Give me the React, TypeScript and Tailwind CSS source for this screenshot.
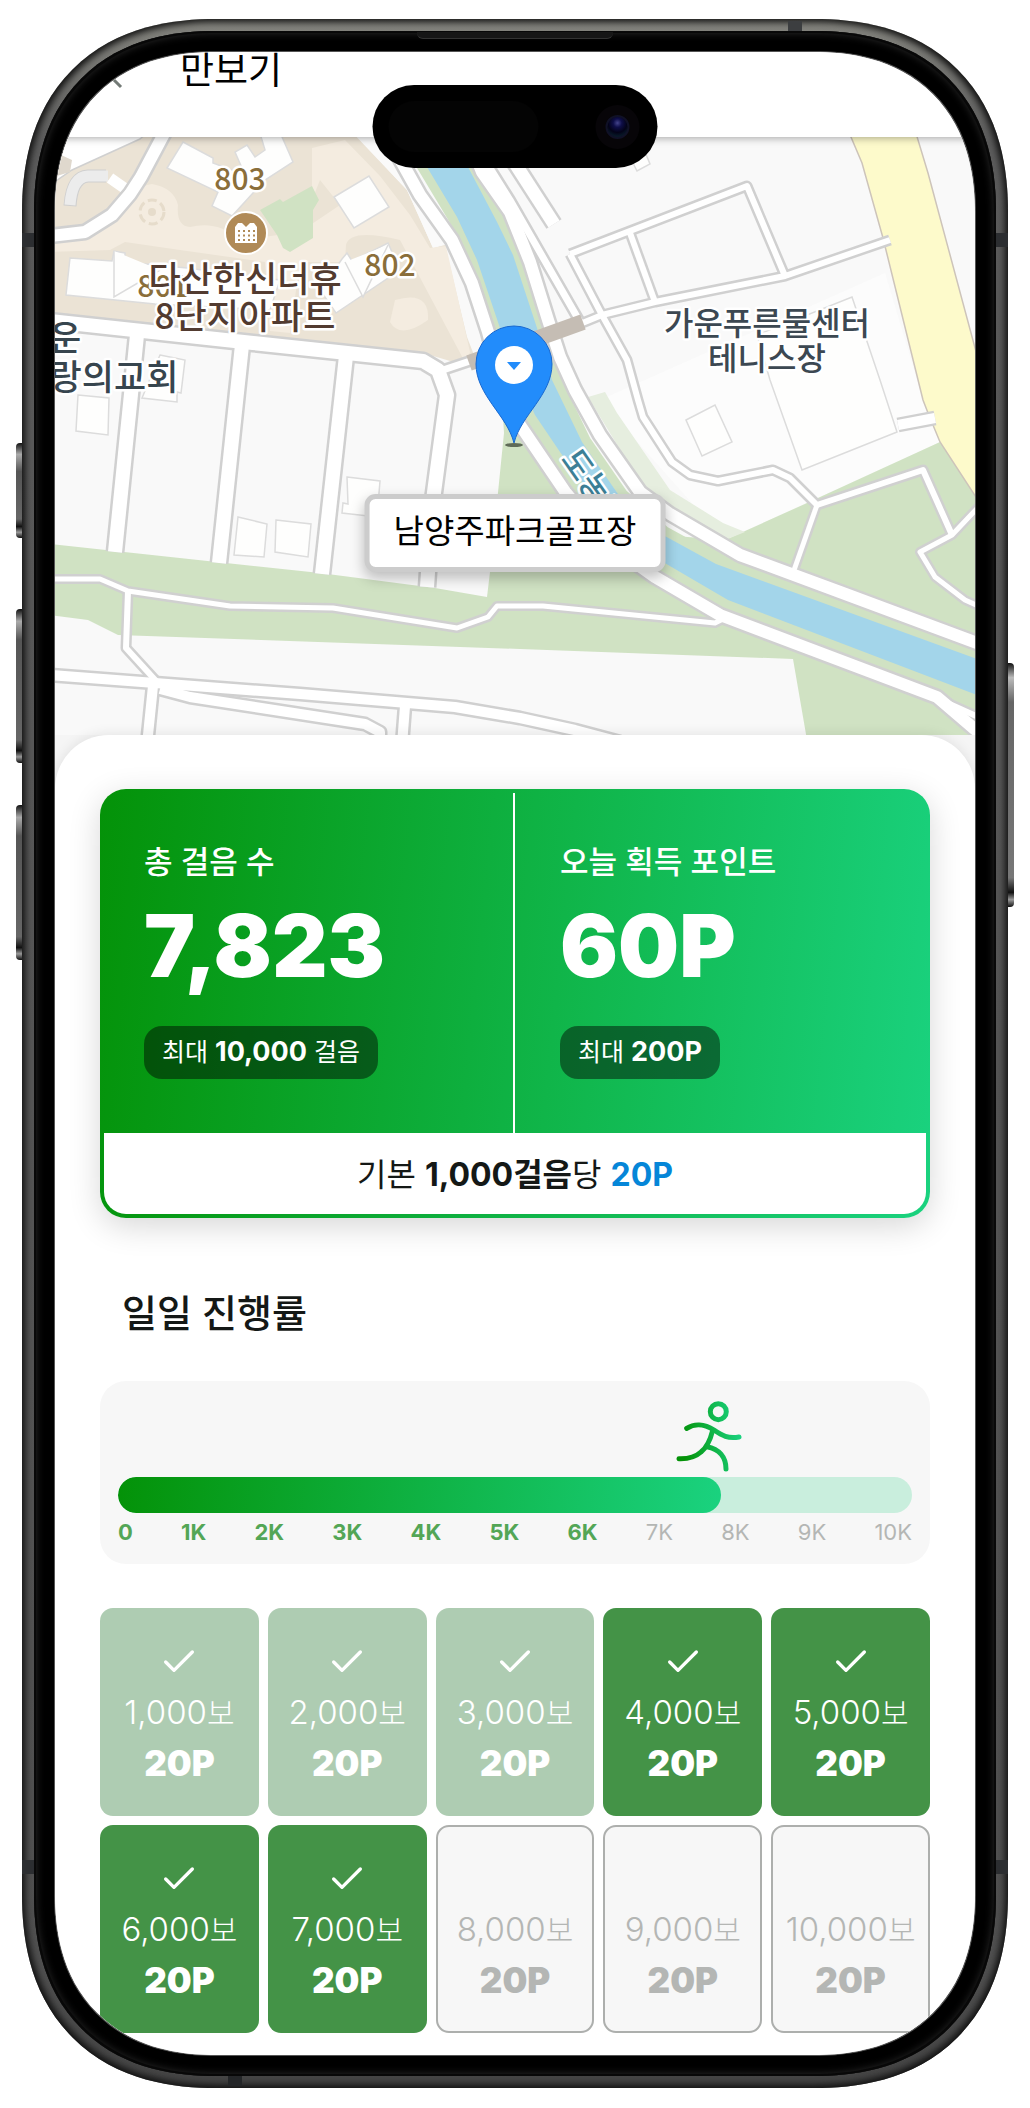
import { Check } from 'lucide-react';

const roads = [
  { d: 'M166 130 L141 177 L130 194 L112 215 L85 232 L50 236', w: 12 },
  { d: 'M50 321 L253 343 L423 361 L438 370 L447 395 L433 500 L427 587', w: 14 },
  { d: 'M440 371 L470 361', w: 7 },
  { d: 'M137 335 L115 552', w: 14 },
  { d: 'M242 345 L219 563', w: 14 },
  { d: 'M346 356 L322 574', w: 14 },
  { d: 'M395 150 L420 195 L452 240 L472 283 L488 332 L502 385 L520 425 L566 493 L610 545 L655 577 L720 615 L937 697 L985 738', w: 12 },
  { d: 'M465 130 L482 172 L510 212 L530 262 L548 320 L560 357 L575 390 L600 435 L640 492 L670 514 L740 555 L840 592 L985 646', w: 12 },
  { d: 'M485 160 L510 200 L580 322', w: 7 },
  { d: 'M500 140 L554 224', w: 13 },
  { d: 'M580 324 L602 315 L655 302 L785 276 L890 240', w: 6 },
  { d: 'M570 254 L747 186 L785 276', w: 6 },
  { d: 'M570 254 L602 315 L627 360 L638 400 L643 417 L672 462 L690 475 L718 481 L773 470 L790 478 L817 505 L923 470 L952 535', w: 6 },
  { d: 'M630 233 L655 302', w: 6 },
  { d: 'M817 505 L793 573', w: 5 },
  { d: 'M985 500 L952 535 L920 552 L935 577 L965 600 L985 609', w: 5 },
  { d: 'M898 425 L935 418', w: 10 },
  { d: 'M50 579 L100 579 L128 591 L230 606 L333 608 L457 628 L488 617 L497 606 L543 606 L715 623 L723 619', w: 5 },
  { d: 'M128 591 L126 648 L157 682', w: 6 },
  { d: 'M50 675 L155 683 L300 694 L455 707 L520 718 L575 730 L620 742', w: 10 },
  { d: 'M160 689 L190 697 L365 724 L380 732 L380 745', w: 10 },
  { d: 'M153 686 L147 745', w: 10 },
  { d: 'M405 706 L402 745', w: 10 },
  { d: 'M945 702 L985 720', w: 6 },
];

const buildings = [
  'M183 142 L213 158 L213 163 L245 175 L235 152 L247 145 L255 157 L265 150 L259 130 L279 130 L293 162 L265 180 L253 193 L232 216 L212 206 L218 192 L167 168z',
  'M334 197 L369 176 L389 207 L354 228z',
  'M70 258 L112 261 L114 251 L125 253 L125 262 L187 268 L280 280 L270 310 L155 304 L66 295z',
  'M114 251 L114 297 L160 270',
  'M342 259 L347 253 L352 261 L388 243 L400 270 L336 313 L320 290z',
  'M345 262 L363 297 L388 245',
  'M78 395 L109 398 L108 435 L76 431z',
  'M238 517 L267 524 L264 557 L234 555z',
  'M276 520 L311 524 L308 557 L275 552z',
  'M347 477 L380 481 L377 517 L342 513 L343 503 L348 504z',
  'M160 355 L185 360 L181 393 L177 392 L177 402 L142 398z',
  'M757 335 L852 297 L880 380 L897 432 L802 470 L770 380z',
  'M686 420 L715 405 L732 442 L702 456z',
  'M632 161 L637 171 L650 164 L645 152z',
];

const river =
  'M455 130 L468 167 L497 222 L513 255 L537 328 L552 380 L582 442 L620 497 L663 535 L716 564 L985 662 L985 698 L728 600 L663 562 L610 520 L560 452 L535 415 L515 372 L500 328 L477 260 L457 217 L427 167 L405 130z';

const mapLabels = [
  { text: '801', x: 163, y: 297, size: 30, fill: '#8a6e3a' },
  { text: '803', x: 240, y: 190, size: 30, fill: '#8a6e3a' },
  { text: '802', x: 390, y: 276, size: 30, fill: '#8a6e3a' },
  { text: '다산한신더휴', x: 245, y: 292, size: 35, fill: '#523b30' },
  { text: '8단지아파트', x: 245, y: 329, size: 35, fill: '#523b30' },
  { text: '운', x: 65, y: 351, size: 35, fill: '#37454e' },
  { text: '랑의교회', x: 114, y: 390, size: 35, fill: '#37454e' },
  { text: '가운푸른물센터', x: 767, y: 335, size: 32, fill: '#3c4852' },
  { text: '테니스장', x: 767, y: 370, size: 32, fill: '#3c4852' },
];

const ticks = ['0', '1K', '2K', '3K', '4K', '5K', '6K', '7K', '8K', '9K', '10K'];

const rewards = [
  { steps: '1,000', status: 'claimed' },
  { steps: '2,000', status: 'claimed' },
  { steps: '3,000', status: 'claimed' },
  { steps: '4,000', status: 'ready' },
  { steps: '5,000', status: 'ready' },
  { steps: '6,000', status: 'ready' },
  { steps: '7,000', status: 'ready' },
  { steps: '8,000', status: 'locked' },
  { steps: '9,000', status: 'locked' },
  { steps: '10,000', status: 'locked' },
];

const rewardStyles: Record<string, string> = {
  claimed: 'bg-[#aeccb2] text-white',
  ready: 'bg-[#449347] text-white',
  locked: 'bg-[#f7f7f7] text-[#b4b6b4] border-2 border-[#adafad]',
};

function StepMap() {
  return (
    <svg
      viewBox="55 137 920 598"
      preserveAspectRatio="xMidYMid slice"
      className="block w-full h-[598px] bg-[#f9f9f9]"
      role="img"
      aria-label="지도"
    >
      {/* Apartment complex ground */}
      <path d="M50 130 L350 130 L407 190 L433 248 L445 245 L455 287 L467 337 L474 355 L467 366 L423 353 L253 335 L50 313z" fill="#ebe3d5" />
      <path d="M352 130 L363 143 L407 190 L433 248 L445 244 L425 205 L400 160 L385 130z" fill="#fafafa" />
      <path d="M50 252 L50 240 Q90 236 118 214 Q132 186 152 184 Q174 188 178 205 Q176 226 190 227 Q218 220 240 240 L300 232 L340 205 L320 180 L312 200 L312 148 L345 140 L380 176 L410 215 L430 248 L446 246 L470 352 L466 364 L400 240 Q350 228 346 245 L345 262 L300 262 L290 333 L270 331 L265 262 L180 250 L125 242 L110 250z" fill="#f4ece0" />
      <path d="M395 300 Q430 290 428 320 Q400 340 390 322z" fill="#f4ece0" />
      <path d="M50 130 L150 130 L140 139 L72 170 L50 185z" fill="#fff" stroke="#d0d0d0" strokeWidth="1.5" />
      <path d="M50 150 L72 160 L70 172 L50 178z" fill="#dfd8cd" />
      <path d="M260 210 L280 199 L283 202 L312 186 L319 200 L313 210 L313 238 L290 252 L283 248 L277 235z" fill="#d0e2c3" />
      <circle cx="152" cy="212" r="12" fill="none" stroke="#e6dccb" strokeWidth="3" strokeDasharray="9 4" />
      <circle cx="152" cy="212" r="4" fill="#e6dccb" />
      <path d="M70 206 Q72 177 88 176 L106 176" fill="none" stroke="#d0d0d0" strokeWidth="13" />
      <path d="M70 205 Q72 177 88 176 L108 176" fill="none" stroke="#ececec" strokeWidth="11" />
      <path d="M110 178 L130 192" stroke="#fff" strokeWidth="11" />

      {/* Parks */}
      <path d="M885 273 L923 400 L940 442 L725 540 L600 400z" fill="#fcfcfc" />
      <path d="M50 544 L320 573 L435 588 L487 597 L490 572 L504 433 L500 370 L560 452 L663 535 L725 540 L807 503 L940 442 L985 505 L985 740 L807 740 L793 659 L520 649 L118 635 L88 620 L50 615z" fill="#d0e2c3" />
      <path d="M588 397 L605 392 L617 413 L670 490 L723 523 L745 532 L725 540 L660 515z" fill="#e6eedf" />
      <path d={river} fill="#a3d5ea" stroke="#d0e2c3" strokeWidth="18" />
      <path d={river} fill="#a3d5ea" />
      <path d="M848 130 L862 163 L883 238 L923 400 L928 413 L940 442 L985 511 L985 385 L928 173 L915 130z" fill="#fdfacb" stroke="#cdc4ba" strokeWidth="1.5" />

      {buildings.map((d) => (
        <path key={d} d={d} fill="#fefefd" stroke="#dcdcdc" strokeWidth="1.5" />
      ))}
      {roads.map((road) => (
        <path key={road.d} d={road.d} fill="none" stroke="#d0d0d0" strokeWidth={road.w + 5} strokeLinejoin="round" />
      ))}
      {roads.map((road) => (
        <path key={road.d} d={road.d} fill="none" stroke="#fff" strokeWidth={road.w} strokeLinejoin="round" />
      ))}
      <path d="M469 363 L583 322" stroke="#c5bdb4" strokeWidth="16" />

      {/* Apartment marker */}
      <circle cx="246" cy="233" r="21" fill="#b08a57" stroke="#fff" strokeWidth="2" />
      <path d="M235 243 V227 L238 223 H242 L246 227 L250 223 H254 L257 227 V243z" fill="#fff" />
      <path d="M238 231 H256 M238 235.500 H256 M238 240 H256" stroke="#b08a57" strokeWidth="2" strokeDasharray="2 3" />

      <g
        fontFamily="'Noto Sans CJK KR', sans-serif"
        fontWeight="500"
        stroke="#fff"
        strokeWidth="5"
        strokeLinejoin="round"
        paintOrder="stroke"
      >
        {mapLabels.map((label) => (
          <text key={label.text} x={label.x} y={label.y} fontSize={label.size} fill={label.fill} textAnchor="middle">
            {label.text}
          </text>
        ))}
        <text transform="translate(560 459) rotate(55)" fontSize="32" fill="#3c7f96">
          도농천
        </text>
      </g>

      {/* Current place pin */}
      <ellipse cx="514" cy="445" rx="9" ry="2" fill="#5f6b57" />
      <path d="M514 443 C507 415 476 395 476 364 A38 38 0 0 1 552 364 C552 395 521 415 514 443z" fill="#228cfb" stroke="#1868d0" strokeWidth="1" />
      <circle cx="514" cy="365" r="19" fill="#fff" />
      <path d="M507 362 H521 L514 370z" fill="#228cfb" />
    </svg>
  );
}

function Runner() {
  return (
    <svg viewBox="0 0 66 72" className="w-[66px] h-[72px]" fill="none" strokeWidth="5" strokeLinecap="round" aria-hidden="true">
      <defs>
        <linearGradient id="runner" gradientUnits="userSpaceOnUse" x1="6" y1="40" x2="64" y2="32">
          <stop offset="0" stopColor="#049208" />
          <stop offset="1" stopColor="#1ad27f" />
        </linearGradient>
      </defs>
      <g stroke="url(#runner)">
        <circle cx="42.300" cy="10.700" r="8" />
        <path d="M10.700 27.300 C18 22.500 28 22.500 38 29 C46 34.500 52 38 63 36" />
        <path d="M36.500 30 C34 40 30 47 25 51 C19 56.500 12 58 3 57.700" />
        <path d="M31 45.700 C43 48 50 56 50 68" />
      </g>
    </svg>
  );
}

function SummaryCard() {
  return (
    <section className="rounded-[26px] p-1 bg-[linear-gradient(96deg,#049208,#1ad27f)] shadow-[0_8px_32px_rgba(0,0,0,0.16)]">
      <div className="grid grid-cols-2 text-white">
        <div className="pt-[49px] pb-[54px] pl-10 border-r-2 border-white">
          <h2 className="text-[31px] leading-10 font-medium">총 걸음 수</h2>
          <p className="mt-5 text-[86px] leading-[88px] font-black">7,823</p>
          <p className="mt-9 inline-flex items-center h-[53px] px-[18px] rounded-[18px] bg-black/45 text-[25px] whitespace-pre">
            최대 <strong className="text-[27px]">10,000</strong> 걸음
          </p>
        </div>
        <div className="pt-[49px] pb-[54px] pl-[45px]">
          <h2 className="text-[31px] leading-10 font-medium">오늘 획득 포인트</h2>
          <p className="mt-5 text-[86px] leading-[88px] font-black">60P</p>
          <p className="mt-9 inline-flex items-center h-[53px] px-[18px] rounded-[18px] bg-black/45 text-[25px] whitespace-pre">
            최대 <strong className="text-[27px]">200P</strong>
          </p>
        </div>
      </div>
      <p className="flex items-center justify-center h-[81px] pt-0.5 rounded-b-[22px] bg-white text-[#141816] text-[32px] whitespace-pre">
        기본 <strong>1,000걸음</strong>당 <strong className="text-[#0586d8]">20P</strong>
      </p>
    </section>
  );
}

function DailyProgress() {
  return (
    <section>
      <h2 className="mt-[71px] pl-[22px] text-[38px] leading-[48px] font-medium text-[#141816]">일일 진행률</h2>
      <div className="mt-11 pt-5 pb-[17px] px-[18px] rounded-[26px] bg-[#f7f7f7]">
        <div className="flex justify-end w-[79%] pr-[3px] mb-1">
          <Runner />
        </div>
        <div
          role="progressbar"
          aria-label="일일 진행률"
          aria-valuenow={7823}
          aria-valuemin={0}
          aria-valuemax={10000}
          className="h-9 rounded-full overflow-hidden bg-[#c9eedd]"
        >
          <div className="h-full w-[76%] rounded-full bg-[linear-gradient(96deg,#049208,#1ad27f)]"></div>
        </div>
        <div className="flex justify-between mt-1 text-[22px] leading-[30px]">
          {ticks.map((tick, idx) => (
            <span key={tick} className={idx < 7 ? 'font-bold text-[#53a656]' : 'text-[#b4b6b4]'}>
              {tick}
            </span>
          ))}
        </div>
      </div>

      <div className="grid grid-cols-5 gap-[9px] mt-11">
        {rewards.map((reward) => (
          <button
            key={reward.steps}
            type="button"
            disabled={reward.status !== 'ready'}
            className={`flex flex-col items-center justify-center h-52 rounded-[13px] leading-[50px] whitespace-nowrap ${rewardStyles[reward.status]}`}
          >
            <span className="flex items-center h-[50px]">
              {reward.status !== 'locked' && <Check className="w-10 h-10" strokeWidth={2} />}
            </span>
            <span className="text-[33px] font-light">
              {reward.steps}
              <span className="text-[30px]">보</span>
            </span>
            <span className="text-[35px] font-black">20P</span>
          </button>
        ))}
      </div>
    </section>
  );
}

export default function App() {
  return (
    <div className="bg-white px-[22px] pt-[19px] pb-5 font-[Inter,'Noto_Sans_CJK_KR',sans-serif]">
      <div className="relative">
        {/* Side buttons */}
        <div className="absolute -left-1.5 top-[424px] w-2 h-[95px] rounded-l-sm bg-[linear-gradient(#111,#aaa_12%,#555_30%,#666_80%,#111_88%,#999_94%,#111)]"></div>
        <div className="absolute -left-1.5 top-[590px] w-2 h-[154px] rounded-l-sm bg-[linear-gradient(#111,#aaa_8%,#555_20%,#666_85%,#111_92%,#999_96%,#111)]"></div>
        <div className="absolute -left-1.5 top-[786px] w-2 h-[155px] rounded-l-sm bg-[linear-gradient(#111,#aaa_8%,#555_20%,#666_85%,#111_92%,#999_96%,#111)]"></div>
        <div className="absolute -right-1.5 top-[644px] w-2 h-[244px] rounded-r-sm bg-[linear-gradient(#111,#bbb_6%,#666_16%,#777_88%,#111_94%,#999_97%,#111)]"></div>

        {/* Metal frame */}
        <div className="relative overflow-hidden rounded-[194px] [corner-shape:superellipse(1.2)] p-3 bg-[linear-gradient(#85857f,#5c5c5c_6%,#505050_94%,#444)] shadow-[inset_0_0_7px_3px_#101010]">
          <div className="absolute top-0.5 right-[206px] w-3.5 h-3 bg-[#3c3e40]"></div>
          <div className="absolute bottom-0.5 left-[206px] w-3.5 h-3 bg-[#242628]"></div>
          <div className="absolute left-0 top-[214px] w-3 h-3.5 bg-[#2c2e31]"></div>
          <div className="absolute right-0 top-[214px] w-3 h-3.5 bg-[#2c2e31]"></div>
          <div className="absolute left-0 bottom-[214px] w-3 h-3.5 bg-[#2c2e31]"></div>
          <div className="absolute right-0 bottom-[214px] w-3 h-3.5 bg-[#2c2e31]"></div>

          <div className="relative rounded-[182px] [corner-shape:superellipse(1.2)] p-[21px] bg-black shadow-[inset_0_0_0_2px_#080808,inset_0_0_10px_1px_#333]">
            <div className="absolute top-px left-1/2 -translate-x-1/2 w-[196px] h-[7px] rounded-b-md bg-[#161616] border-b border-[#333]"></div>

            <div className="relative overflow-hidden rounded-[162px] [corner-shape:superellipse(1.2)] bg-[#f5f5f5] ring-1 ring-[#555]">
              <header className="relative z-10 flex items-start h-[85px] pl-12 bg-white shadow-[0_1px_8px_rgba(0,0,0,0.35)]">
                <button type="button" aria-label="뒤로">
                  <svg viewBox="0 0 20 38" className="w-5 h-[38px]" fill="none" stroke="#737a76" strokeWidth="3" aria-hidden="true">
                    <path d="M18 1 L1 18 L18 35" />
                  </svg>
                </button>
                <h1 className="pl-[57px] text-[37px] leading-[38px] text-black">만보기</h1>
              </header>

              <div className="relative">
                <StepMap />
                <div className="absolute top-[357px] left-1/2 -translate-x-1/2 flex items-center h-[78px] px-6 pb-0.5 rounded-[11px] border-[5px] border-[#ccc] bg-white text-[33px] text-black whitespace-nowrap shadow-[0_6px_14px_rgba(0,0,0,0.25)]">
                  남양주파크골프장
                </div>
              </div>

              <main className="relative px-[45px] pt-[54px] pb-[22px] rounded-t-[54px] bg-white shadow-[0_-2px_12px_rgba(0,0,0,0.08)]">
                <SummaryCard />
                <DailyProgress />
              </main>

              {/* Dynamic island */}
              <div className="absolute z-20 top-[33px] left-1/2 -translate-x-1/2 flex items-center justify-between w-[285px] h-[83px] pl-4 pr-[18px] rounded-full bg-black">
                <div className="w-[150px] h-[51px] rounded-full bg-[#040404]"></div>
                <div className="flex items-center justify-center w-11 h-11 rounded-full bg-[#070508]">
                  <div className="w-6 h-6 rounded-full border-2 border-[#101126] bg-[radial-gradient(circle_at_50%_30%,#44448c_0,#0e0e48_25%,#030318_55%,#081c2a_80%)]"></div>
                </div>
              </div>
            </div>
          </div>
        </div>
      </div>
    </div>
  );
}
